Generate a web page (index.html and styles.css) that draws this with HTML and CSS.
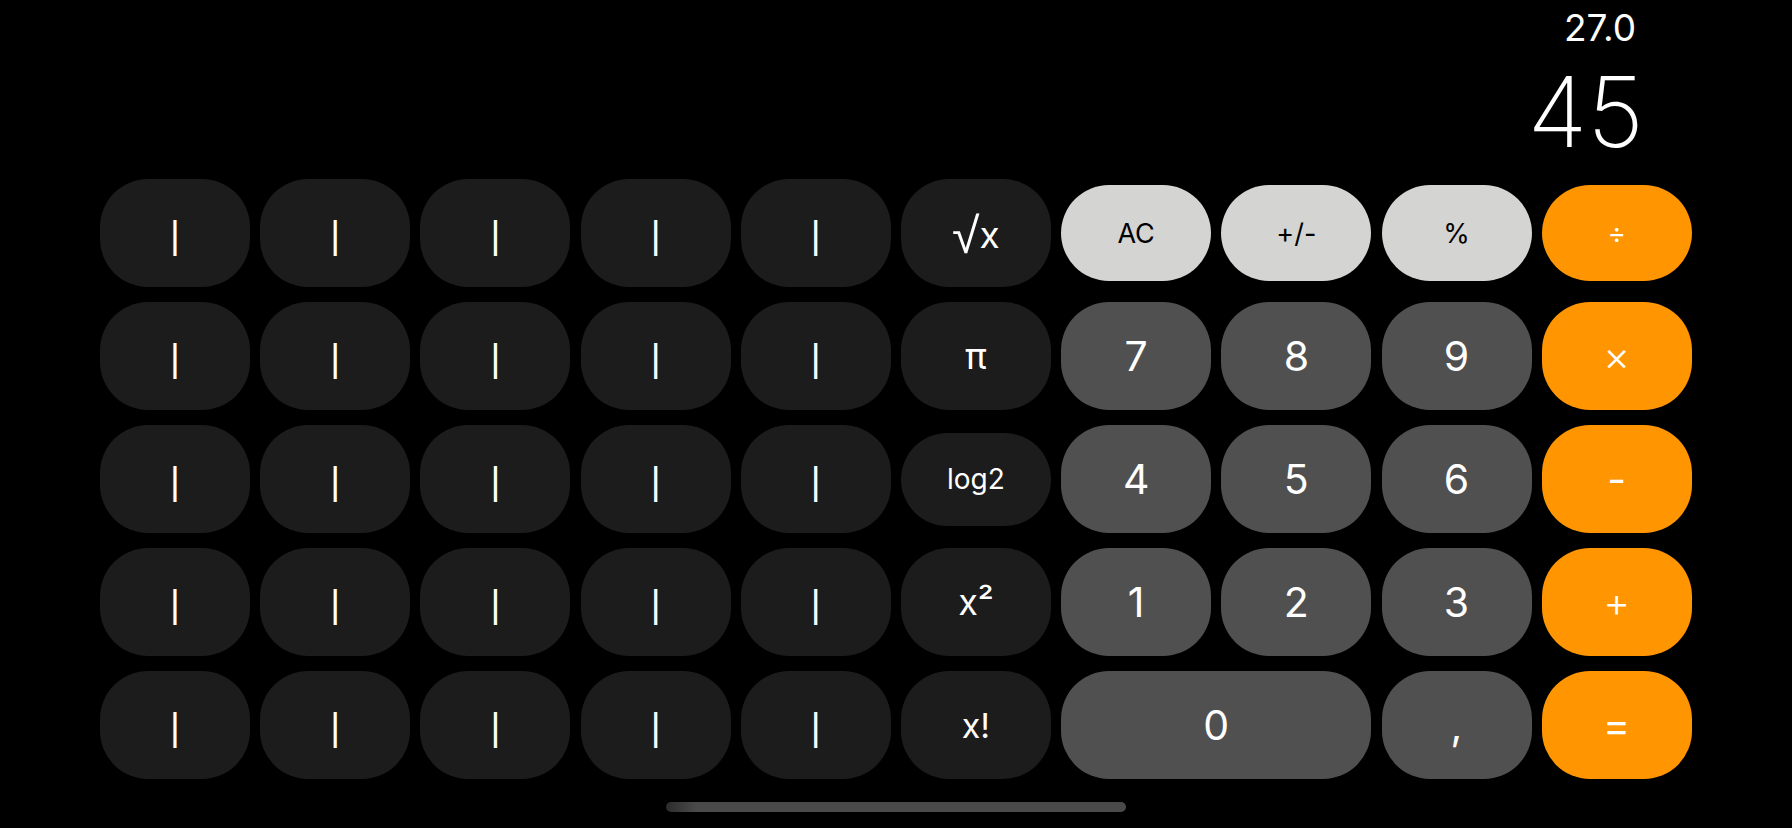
FILE: index.html
```html
<!DOCTYPE html>
<html lang="en">
<head>
<meta charset="utf-8">
<title>Calculator</title>
<link rel="stylesheet" href="styles.css">
</head>
<body>
<main class="calc">
  <section class="display">
    <div class="history">27.0</div>
    <div class="result">45</div>
  </section>
  <section class="keys">
    <button class="key sci bar">|</button>
    <button class="key sci bar">|</button>
    <button class="key sci bar">|</button>
    <button class="key sci bar">|</button>
    <button class="key sci bar">|</button>
    <button class="key sci func"><span class="sqrt"><span class="rad">√</span>x</span></button>
    <button class="key util short">AC</button>
    <button class="key util short">+/-</button>
    <button class="key util short">%</button>
    <button class="key op short small-op">÷</button>

    <button class="key sci bar">|</button>
    <button class="key sci bar">|</button>
    <button class="key sci bar">|</button>
    <button class="key sci bar">|</button>
    <button class="key sci bar">|</button>
    <button class="key sci func">π</button>
    <button class="key num">7</button>
    <button class="key num">8</button>
    <button class="key num">9</button>
    <button class="key op thin-op">×</button>

    <button class="key sci bar">|</button>
    <button class="key sci bar">|</button>
    <button class="key sci bar">|</button>
    <button class="key sci bar">|</button>
    <button class="key sci bar">|</button>
    <button class="key sci func log">log2</button>
    <button class="key num">4</button>
    <button class="key num">5</button>
    <button class="key num">6</button>
    <button class="key op">-</button>

    <button class="key sci bar">|</button>
    <button class="key sci bar">|</button>
    <button class="key sci bar">|</button>
    <button class="key sci bar">|</button>
    <button class="key sci bar">|</button>
    <button class="key sci func">x²</button>
    <button class="key num">1</button>
    <button class="key num">2</button>
    <button class="key num">3</button>
    <button class="key op thin-op">+</button>

    <button class="key sci bar">|</button>
    <button class="key sci bar">|</button>
    <button class="key sci bar">|</button>
    <button class="key sci bar">|</button>
    <button class="key sci bar">|</button>
    <button class="key sci func fact">x!</button>
    <button class="key num zero">0</button>
    <button class="key num">,</button>
    <button class="key op">=</button>
  </section>
  <div class="home-indicator"></div>
</main>
</body>
</html>
```

FILE: styles.css
```css
html, body {
  margin: 0;
  padding: 0;
  background: #000;
}

body {
  width: 1792px;
  height: 828px;
  overflow: hidden;
  font-family: "Inter", "Liberation Sans", sans-serif;
  color: #fff;
}

.calc {
  display: flex;
  flex-direction: column;
}

.display {
  display: flex;
  flex-direction: column;
  align-items: flex-end;
  padding: 9px 148px 0 0;
}

.history {
  margin-right: 8px;
  font-size: 37px;
  line-height: 38px;
  font-weight: 400;
}

.result {
  margin-top: 16px;
  font-size: 98px;
  line-height: 98px;
  font-weight: 200;
}

.keys {
  margin-top: 18px;
  padding: 0 100px;
  display: grid;
  grid-template-columns: repeat(10, 150px);
  grid-auto-rows: 108px;
  column-gap: 10.2px;
  row-gap: 15px;
}

.key {
  border: none;
  margin: 0;
  padding: 0;
  border-radius: 48px;
  font-family: "Inter", "Liberation Sans", sans-serif;
  font-size: 41px;
  font-weight: 400;
  color: #fff;
  display: flex;
  align-items: center;
  justify-content: center;
}

.sci {
  background: #1c1c1c;
}

.bar {
  font-family: "Liberation Sans", sans-serif;
  font-size: 38px;
  padding-top: 4px;
}

.func {
  font-size: 36px;
}

.sqrt {
  font-size: 37px;
  line-height: 1;
  padding-top: 6px;
}

.rad {
  font-family: "DejaVu Sans", sans-serif;
  font-weight: 200;
  font-size: 50px;
  vertical-align: -5px;
  margin-right: 0;
}

.fact {
  font-size: 34px;
}

.log {
  font-size: 28px;
  height: 93px;
  align-self: center;
}

.num {
  background: #505050;
}

.zero {
  grid-column: span 2;
}

.util {
  background: #d4d4d2;
  color: #000;
  font-size: 27px;
}

.op {
  background: #ff9500;
  color: #fff;
}

.thin-op {
  font-weight: 300;
}

.short {
  height: 96px;
  align-self: center;
}

.small-op {
  font-size: 28px;
}

.home-indicator {
  align-self: center;
  margin-top: 23px;
  width: 460px;
  height: 10px;
  border-radius: 5px;
  background: linear-gradient(to right, #2c2c2c 0, #4a4a4a 30px, #4a4a4a 100%);
}
```
